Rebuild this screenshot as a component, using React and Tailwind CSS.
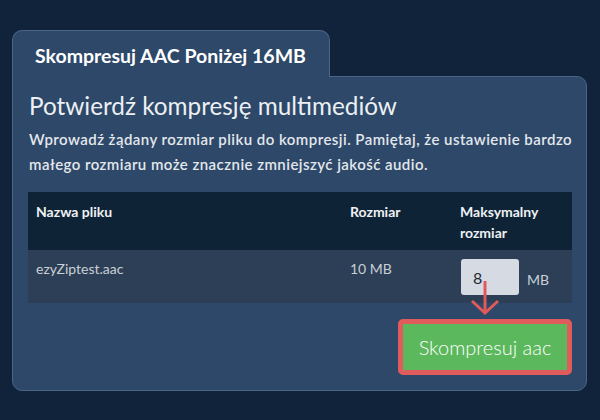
export default function App() {
  return (
    <div
      className="w-[600px] h-[420px] bg-[#10233a] pt-[30px] pl-[12px] overflow-hidden"
      style={{ fontFamily: "Lato, 'Noto Sans', sans-serif" }}
    >
      <div className="w-[575px]">
        <div className="relative z-10 -mb-px w-[318px] h-[47px] bg-[#2d4869] border border-b-0 border-[#4b6587] rounded-t-[10px] pl-[22px] pt-[11px]">
          <div className="text-[19.5px] leading-[28px] font-bold text-white">Skompresuj AAC Poniżej 16MB</div>
        </div>
        <div className="bg-[#2d4869] border border-[#4b6587] rounded-b-[10px] rounded-tr-[10px] px-[15px] pt-[14px] pb-[15px]">
          <h1 className="pl-px text-[24.3px] leading-[29px] font-normal text-[#eceff3]">Potwierdź kompresję multimediów</h1>
          <p className="pl-px mt-[7px] text-[15px] leading-[25px] tracking-[0.45px] font-semibold text-[#e3e7ec] whitespace-nowrap">
            <span className="block">Wprowadź żądany rozmiar pliku do kompresji. Pamiętaj, że ustawienie bardzo</span>
            <span className="block">małego rozmiaru może znacznie zmniejszyć jakość audio.</span>
          </p>
          <div className="mt-[15px] w-[544px]">
            <div className="grid grid-cols-[314px_110px_1fr] bg-[#0f2336] h-[58px] text-[14px] leading-[21px] font-bold text-[#eef1f4]">
              <div className="pl-[8px] pt-[9px]">Nazwa pliku</div>
              <div className="pl-[8px] pt-[9px]">Rozmiar</div>
              <div className="pl-[8px] pt-[9px]">Maksymalny<br />rozmiar</div>
            </div>
            <div className="grid grid-cols-[314px_110px_1fr] bg-[#2d3f56] h-[53px] text-[14px] leading-[21px] text-[#c9cfd6]">
              <div className="pl-[8px] pt-[8px]">ezyZiptest.aac</div>
              <div className="pl-[8px] pt-[8px]">10 MB</div>
              <div className="pl-[9px] pt-[9px] flex items-start gap-[8px]">
                <div className="relative">
                  <div className="w-[58px] h-[36px] bg-[#d6dbe3] rounded-[3px] pl-[12px] flex items-center text-[16px] text-[#1e2a38]">8</div>
                  <svg className="absolute left-[9px] top-[22px] z-20" width="32" height="34" viewBox="0 0 32 34" fill="none">
                    <path d="M15 0 V32" stroke="#e05a5a" strokeWidth="3" />
                    <path d="M2 20 L15 32 L28 20" stroke="#e05a5a" strokeWidth="3" strokeLinejoin="miter" />
                  </svg>
                </div>
                <div className="h-[36px] flex items-center pt-[4px] text-[#c9cfd6]">MB</div>
              </div>
            </div>
            <div className="flex justify-end mt-[16px]">
              <button className="w-[174px] h-[56px] border-[5px] border-[#e05c5c] rounded-[5px] bg-[#5cb85c] text-white text-[20px] font-light leading-none">
                Skompresuj aac
              </button>
            </div>
          </div>
        </div>
      </div>
    </div>
  );
}
